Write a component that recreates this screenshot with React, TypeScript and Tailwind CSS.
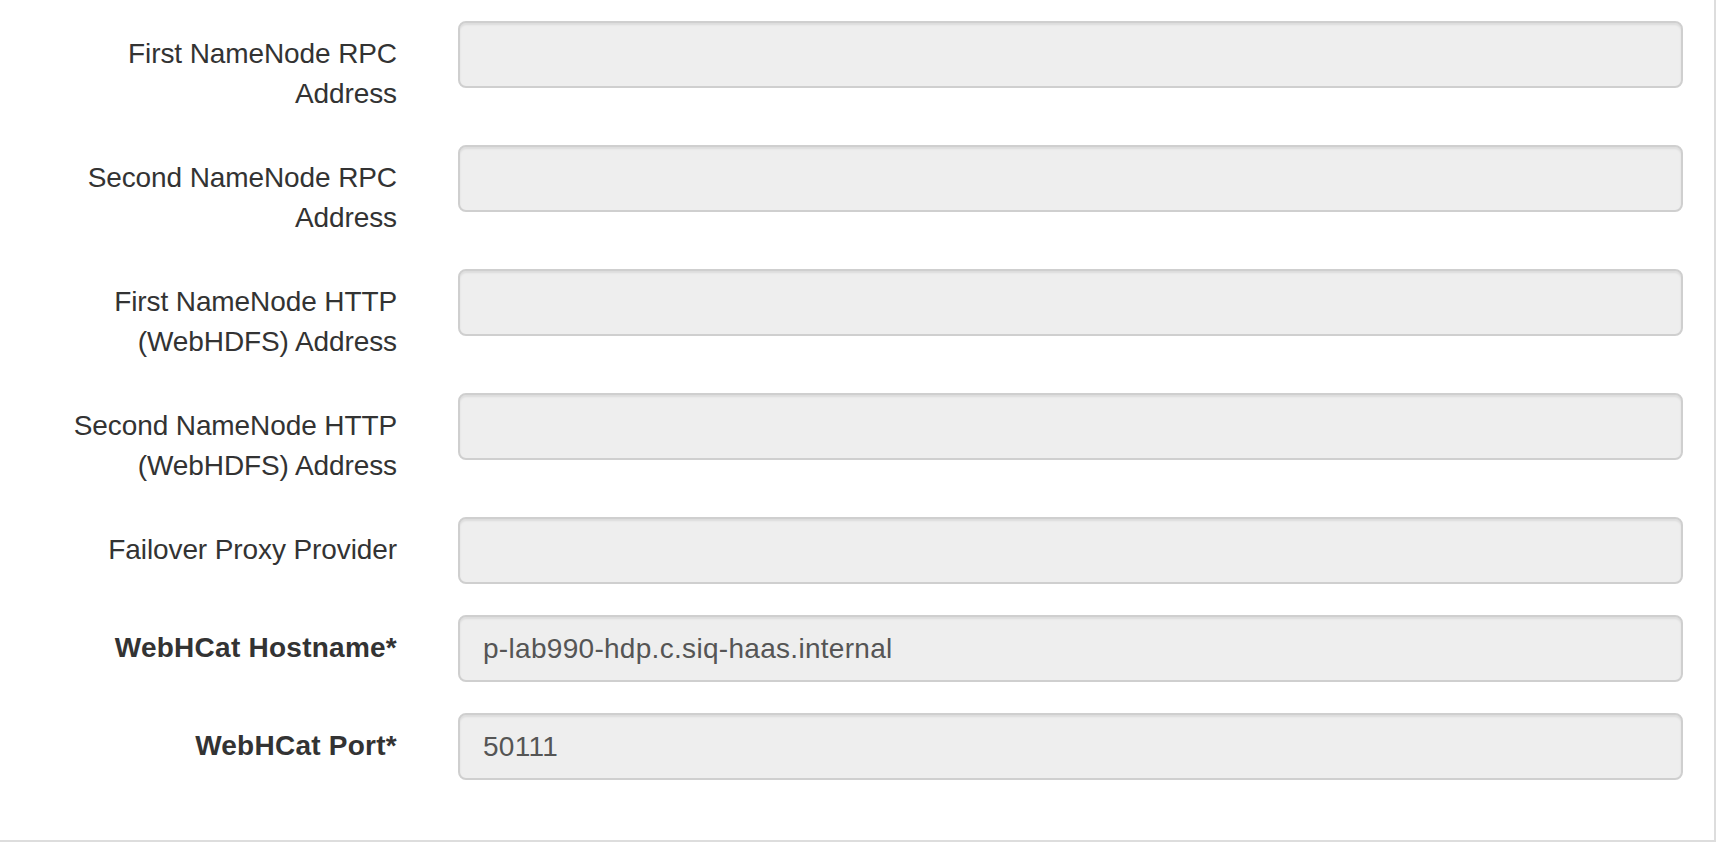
type Field = {
  label: string[]
  value?: string
  required?: boolean
}

const FIELDS: Field[] = [
  { label: ["First NameNode RPC", "Address"] },
  { label: ["Second NameNode RPC", "Address"] },
  { label: ["First NameNode HTTP", "(WebHDFS) Address"] },
  { label: ["Second NameNode HTTP", "(WebHDFS) Address"] },
  { label: ["Failover Proxy Provider"] },
  { label: ["WebHCat Hostname*"], value: "p-lab990-hdp.c.siq-haas.internal", required: true },
  { label: ["WebHCat Port*"], value: "50111", required: true },
]

function FormRow({ field }: { field: Field }) {
  return (
    <div className="flex items-start mb-[31px]">
      <label
        className={
          field.required
            ? "ml-[67px] w-[330px] shrink-0 text-right pt-[13px] leading-[40px] text-[28px] text-[#333] font-bold tracking-[0.25px]"
            : "ml-[67px] w-[330px] shrink-0 text-right pt-[13px] leading-[40px] text-[28px] text-[#333] tracking-[-0.1px]"
        }
      >
        {field.label.map((line) => (
          <span key={line} className="block">
            {line}
          </span>
        ))}
      </label>
      <div className="ml-[61px] mr-[31px] flex-1">
        <input
          readOnly
          value={field.value ?? ""}
          className="block w-full h-[67px] px-[23px] rounded-[8px] border-2 border-[#cfcfcf] bg-[#eeeeee] text-[28px] tracking-[0.3px] text-[#555] shadow-[inset_0_2px_2px_rgba(0,0,0,0.075)] outline-none [font-family:'Liberation_Sans',Arial,sans-serif]"
        />
      </div>
    </div>
  )
}

export default function App() {
  return (
    <div className="w-full h-[846px] bg-white overflow-hidden [font-family:'Liberation_Sans',Arial,sans-serif]">
      <div className="w-[1716px] h-[842px] border-r-2 border-b-2 border-[#dddddd] pt-[21px] flex flex-col">
        {FIELDS.map((field) => (
          <FormRow key={field.label.join(" ")} field={field} />
        ))}
      </div>
    </div>
  )
}
